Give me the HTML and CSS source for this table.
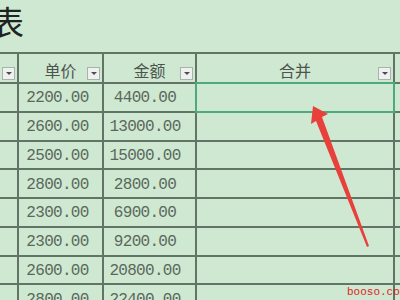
FILE: index.html
```html
<!DOCTYPE html>
<html lang="zh">
<head>
<meta charset="utf-8">
<link rel="stylesheet" href="styles.css">
</head>
<body>
<div class="page">
  <div class="title">表</div>
  <div class="sheet">
    <div class="hcell"><span class="hlabel"></span><span class="dd"></span></div>
    <div class="hcell"><span class="hlabel">单价</span><span class="dd"></span></div>
    <div class="hcell"><span class="hlabel">金额</span><span class="dd"></span></div>
    <div class="hcell"><span class="hlabel">合并</span><span class="dd"></span></div>
    <div class="hcell"></div>

    <div class="cell"></div><div class="cell num c1">2200.00</div><div class="cell num c2">4400.00</div><div class="cell sel"></div><div class="cell"></div>
    <div class="cell"></div><div class="cell num c1">2600.00</div><div class="cell num c2">13000.00</div><div class="cell"></div><div class="cell"></div>
    <div class="cell"></div><div class="cell num c1">2500.00</div><div class="cell num c2">15000.00</div><div class="cell"></div><div class="cell"></div>
    <div class="cell"></div><div class="cell num c1">2800.00</div><div class="cell num c2">2800.00</div><div class="cell"></div><div class="cell"></div>
    <div class="cell"></div><div class="cell num c1">2300.00</div><div class="cell num c2">6900.00</div><div class="cell"></div><div class="cell"></div>
    <div class="cell"></div><div class="cell num c1">2300.00</div><div class="cell num c2">9200.00</div><div class="cell"></div><div class="cell"></div>
    <div class="cell"></div><div class="cell num c1">2600.00</div><div class="cell num c2">20800.00</div><div class="cell"></div><div class="cell"></div>
    <div class="cell"></div><div class="cell num c1">2800.00</div><div class="cell num c2">22400.00</div><div class="cell"></div><div class="cell"></div>
  </div>
  <svg class="arrow" viewBox="0 0 400 300" width="400" height="300">
    <polygon points="313,106 328,114 322,117 369,246 367,247 316,121 311,124" fill="#e8403a" />
  </svg>
  <div class="mark">booso.com</div>
</div>
</body>
</html>
```
FILE: styles.css
```css
html, body {
  margin: 0;
  padding: 0;
  background: #cfe8d1;
}
.page {
  position: relative;
  width: 400px;
  height: 300px;
  overflow: hidden;
  background: #cfe8d1;
  font-family: "Noto Sans CJK SC", "Noto Sans", sans-serif;
}
.title {
  height: 47px;
  padding-top: 5px;
  margin-left: -9px;
  font-size: 33px;
  line-height: 33px;
  color: #1e241f;
}
.sheet {
  display: grid;
  grid-template-columns: 17px 83px 91px 196px 5px;
  grid-template-rows: 28px;
  grid-auto-rows: 26.75px;
  gap: 2px;
  background: #627465;
  border-top: 2px solid #627465;
}
.hcell {
  background: #cfe8d1;
  display: grid;
  grid-template-columns: 1fr auto 1fr;
  align-items: end;
}
.hlabel {
  grid-column: 2;
  font-size: 16px;
  line-height: 16px;
  margin-bottom: 4px;
  color: #4c544e;
  white-space: nowrap;
}
.dd {
  grid-column: 3;
  justify-self: end;
  width: 11px;
  height: 11px;
  margin: 0 2px 2px 0;
  border: 1px solid #a9b2ab;
  background: #eef1ef;
  display: flex;
  align-items: center;
  justify-content: center;
}
.dd::after {
  content: "";
  width: 0;
  height: 0;
  border-left: 3px solid transparent;
  border-right: 3px solid transparent;
  border-top: 3px solid #4a4f4b;
}
.cell {
  background: #cfe8d1;
  display: flex;
  align-items: center;
  justify-content: center;
}
.num {
  font-family: "Liberation Mono", "DejaVu Sans Mono", monospace;
  font-size: 16px;
  letter-spacing: -0.7px;
  padding-top: 2px;
  color: #5a685c;
}
.c1 { padding-right: 6px; }
.c2 { padding-right: 9px; }
.sel {
  outline: 2px solid #4daa7b;
  outline-offset: 0;
}
.arrow {
  position: absolute;
  left: 0;
  top: 0;
  pointer-events: none;
}
.mark {
  position: absolute;
  left: 347px;
  top: 286px;
  font-family: "Liberation Mono", monospace;
  font-size: 11px;
  line-height: 12px;
  color: #e0241f;
  white-space: nowrap;
}
```
